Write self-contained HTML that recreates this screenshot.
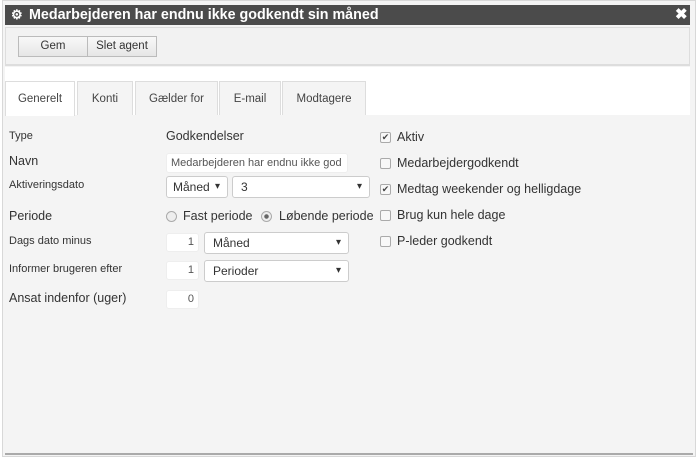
<!DOCTYPE html>
<html><head><meta charset="utf-8"><style>
*{box-sizing:border-box;margin:0;padding:0}
body{width:700px;height:458px;background:#fff;font-family:"Liberation Sans",sans-serif;position:relative;overflow:hidden;color:#333}
.a{position:absolute}
#dlg{left:2px;top:0;width:694px;height:457px;border:1px solid #d8d8d8;background:#f4f4f4}
#title{left:5px;top:5px;width:685px;height:20px;background:#4b4b4b;color:#fff;font-weight:bold;font-size:14.3px;line-height:20px;padding-left:24px}
#tool{left:5px;top:27px;width:685px;height:39px;background:#f2f2f2;border:1px solid #ddd;border-bottom:2px solid #ddd}
.btn{top:36px;height:21px;border:1px solid #bbb;background:linear-gradient(#f8f8f8,#e6e6e6);font-size:11.5px;line-height:19px;text-align:center;color:#333}
#white{left:5px;top:67px;width:685px;height:48px;background:#fff}
.tab{top:81px;height:34px;background:#f4f4f4;border:1px solid #ddd;border-bottom:none;font-size:11.5px;line-height:34px;text-align:center;color:#444}
.l{left:9px;font-size:11px;color:#333}
.lb{font-size:12.5px}
.inp{background:#fff;border:1px solid #eee;border-radius:3px;font-size:11px;color:#555}
.sel{background:#fff;border:1px solid #ccc;border-radius:3px;font-size:12px;color:#333;padding-left:8px}
.sel:after{content:"▾";position:absolute;right:7px;top:0;font-size:10px}
.cb{left:380px;width:11px;height:11px;border:1px solid #aaa;border-radius:2px;background:#f8f8f8;font-size:9px;line-height:9px;text-align:center;color:#444}
.cl{left:397px;font-size:12.5px;color:#333}
.rd{width:11px;height:11px;border:1px solid #aaa;border-radius:50%;background:#eee}
</style></head><body>
<div class="a" id="dlg"></div>
<div class="a" id="title">Medarbejderen har endnu ikke godkendt sin måned</div>
<div class="a" style="left:11px;top:5px;color:#fff;font-size:13px;line-height:20px;font-weight:bold">⚙</div>
<div class="a" style="left:675px;top:5px;color:#fff;font-size:15px;font-weight:bold;line-height:20px">✖</div>
<div class="a" id="tool"></div>
<div class="a btn" style="left:18px;width:70px">Gem</div>
<div class="a btn" style="left:87px;width:70px">Slet agent</div>
<div class="a" id="white"></div>
<div class="a tab" style="left:5px;width:70px;background:#fff;height:35px">Generelt</div>
<div class="a tab" style="left:77px;width:56px">Konti</div>
<div class="a tab" style="left:135px;width:83px">Gælder for</div>
<div class="a tab" style="left:219px;width:62px">E-mail</div>
<div class="a tab" style="left:282px;width:84px">Modtagere</div>

<div class="a l" style="top:130px">Type</div>
<div class="a lb" style="left:166px;top:129px">Godkendelser</div>
<div class="a l lb" style="top:154px">Navn</div>
<div class="a inp" style="left:166px;top:153px;width:182px;height:20px;line-height:18px;padding-left:4px">Medarbejderen har endnu ikke god</div>
<div class="a l" style="top:179px">Aktiveringsdato</div>
<div class="a sel" style="left:166px;top:176px;width:62px;height:22px;line-height:20px;padding-left:6px">Måned</div>
<div class="a sel" style="left:232px;top:176px;width:138px;height:22px;line-height:20px">3</div>
<div class="a l lb" style="top:209px">Periode</div>
<div class="a rd" style="left:166px;top:211px"></div>
<div class="a lb" style="left:183px;top:209px">Fast periode</div>
<div class="a rd" style="left:261px;top:211px;background:radial-gradient(#666 2px,#eee 2.5px)"></div>
<div class="a lb" style="left:279px;top:209px">Løbende periode</div>
<div class="a l" style="top:235px">Dags dato minus</div>
<div class="a inp" style="left:166px;top:233px;width:33px;height:19px;line-height:17px;text-align:right;padding-right:4px">1</div>
<div class="a sel" style="left:204px;top:232px;width:145px;height:22px;line-height:20px">Måned</div>
<div class="a l" style="top:263px">Informer brugeren efter</div>
<div class="a inp" style="left:166px;top:261px;width:33px;height:19px;line-height:17px;text-align:right;padding-right:4px">1</div>
<div class="a sel" style="left:204px;top:260px;width:145px;height:22px;line-height:20px">Perioder</div>
<div class="a l lb" style="top:291px">Ansat indenfor (uger)</div>
<div class="a inp" style="left:166px;top:290px;width:33px;height:19px;line-height:17px;text-align:right;padding-right:4px">0</div>

<div class="a cb" style="top:132px">✔</div><div class="a cl" style="top:130px">Aktiv</div>
<div class="a cb" style="top:158px"></div><div class="a cl" style="top:156px">Medarbejdergodkendt</div>
<div class="a cb" style="top:184px">✔</div><div class="a cl" style="top:182px">Medtag weekender og helligdage</div>
<div class="a cb" style="top:210px"></div><div class="a cl" style="top:208px">Brug kun hele dage</div>
<div class="a cb" style="top:236px"></div><div class="a cl" style="top:234px">P-leder godkendt</div>
<div class="a" style="left:5px;top:453px;width:688px;height:2px;background:#aaa"></div>
</body></html>
